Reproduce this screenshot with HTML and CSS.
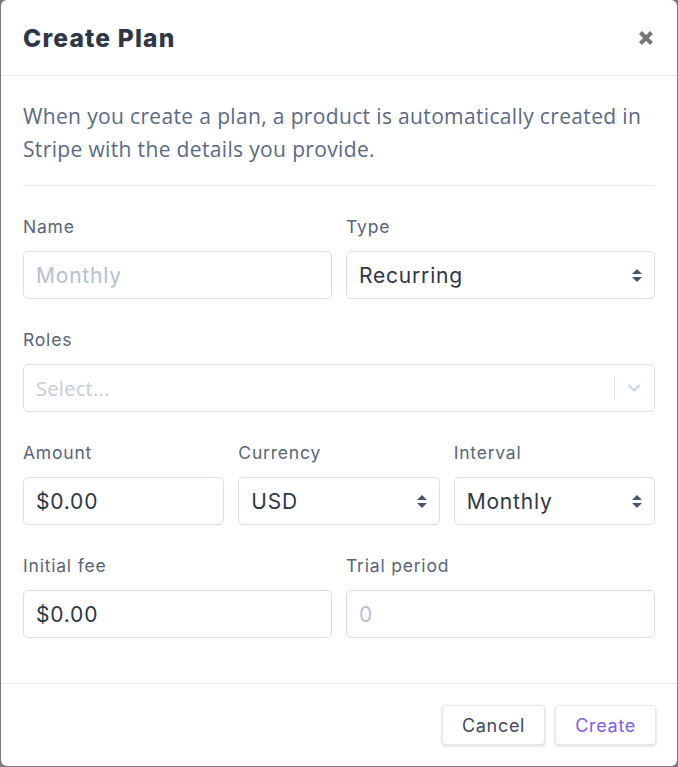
FILE: index.html
```html
<!DOCTYPE html>
<html>
<head>
<meta charset="utf-8">
<link rel="stylesheet" href="styles.css">
</head>
<body>
<div class="modal">
  <div class="header">
    <h1 class="title">Create Plan</h1>
    <span class="close">
      <svg width="16" height="16" viewBox="0 0 16 16"><path d="M2.5 2.5 L13.5 13.5 M13.5 2.5 L2.5 13.5" stroke="#777" stroke-width="4" stroke-linecap="butt"/></svg>
    </span>
  </div>
  <div class="body">
    <p class="desc">When you create a plan, a product is automatically created in Stripe with the details you provide.</p>
    <div class="rule"></div>
    <div class="row two">
      <div class="field">
        <div class="label">Name</div>
        <div class="input placeholder">Monthly</div>
      </div>
      <div class="field">
        <div class="label">Type</div>
        <div class="input select">Recurring<span class="arrows"></span></div>
      </div>
    </div>
    <div class="row one">
      <div class="field">
        <div class="label">Roles</div>
        <div class="input multi"><span class="ph-open">Select...</span><span class="sep"></span><svg class="chev" width="14" height="10" viewBox="0 0 14 10"><path d="M1.5 2 L7 7.5 L12.5 2" fill="none" stroke="#ccd6e5" stroke-width="2.2"/></svg></div>
      </div>
    </div>
    <div class="row three">
      <div class="field">
        <div class="label">Amount</div>
        <div class="input">$0.00</div>
      </div>
      <div class="field">
        <div class="label">Currency</div>
        <div class="input select">USD<span class="arrows"></span></div>
      </div>
      <div class="field">
        <div class="label">Interval</div>
        <div class="input select">Monthly<span class="arrows"></span></div>
      </div>
    </div>
    <div class="row two">
      <div class="field">
        <div class="label">Initial fee</div>
        <div class="input">$0.00</div>
      </div>
      <div class="field">
        <div class="label">Trial period</div>
        <div class="input placeholder">0</div>
      </div>
    </div>
  </div>
  <div class="footer">
    <button class="btn">Cancel</button>
    <button class="btn primary">Create</button>
  </div>
</div>
</body>
</html>
```

FILE: styles.css
```css
html, body { margin: 0; padding: 0; }
body {
  background: #7a7a7a;
  width: 678px;
  height: 767px;
  overflow: hidden;
  font-family: Inter, "Noto Sans", sans-serif;
}
.modal {
  margin: 0 1px;
  height: 766px;
  background: #fff;
  border-radius: 6px;
  display: flex;
  flex-direction: column;
}
.header {
  height: 76px;
  border-bottom: 1px solid #e2e8f3;
  display: flex;
  align-items: center;
  justify-content: space-between;
  padding: 0 23px 0 22px;
  box-sizing: border-box;
}
.title {
  margin: 0;
  font-size: 24.5px;
  font-weight: 800;
  color: #2d3748;
  letter-spacing: 1.2px;
}
.close { display: flex; padding-top: 1px; }
.body {
  padding: 24px 22px 0 22px;
  flex: 1;
}
.desc {
  margin: 0;
  font-family: "Open Sans", sans-serif;
  font-size: 21px;
  line-height: 33px;
  letter-spacing: 0.35px;
  color: #5a6a85;
}
.rule {
  height: 1px;
  background: #e8e8e8;
  margin: 19px 0 31px;
}
.row {
  display: grid;
  gap: 14px;
  margin-bottom: 31px;
}
.two { grid-template-columns: 1fr 1fr; }
.one { grid-template-columns: 1fr; }
.three { grid-template-columns: 1fr 1fr 1fr; }
.label {
  font-size: 17.5px;
  font-weight: 400;
  color: #58657a;
  line-height: 20px;
  letter-spacing: 0.8px;
  margin-bottom: 14px;
}
.input {
  height: 48px;
  box-sizing: border-box;
  border: 1px solid #d5dfee;
  border-radius: 5px;
  padding: 0 12px;
  display: flex;
  align-items: center;
  font-size: 21px;
  letter-spacing: 0.8px;
  color: #2d3748;
  position: relative;
}
.placeholder { color: #b5c0d1; }
.select .arrows {
  position: absolute;
  right: 12px;
  top: 17px;
  width: 10px;
  height: 14px;
}
.select .arrows::before, .select .arrows::after {
  content: "";
  position: absolute;
  left: 0;
  border-left: 5px solid transparent;
  border-right: 5px solid transparent;
}
.select .arrows::before { top: 0; border-bottom: 5px solid #4a5568; }
.select .arrows::after { top: 8px; border-top: 5px solid #4a5568; }
.multi {
  font-family: "Open Sans", sans-serif;
  font-size: 20px;
  letter-spacing: 0.3px;
  color: #c3ccda;
  padding-right: 13px;
}
.ph-open { flex: 1; }
.sep {
  width: 1px;
  height: 24px;
  background: #dde4ee;
  margin-right: 12px;
}
.chev { display: block; }
.footer {
  height: 83px;
  border-top: 1px solid #e2e8f3;
  display: flex;
  justify-content: flex-end;
  align-items: center;
  gap: 10px;
  padding: 0 21px 0 0;
  box-sizing: border-box;
}
.btn {
  height: 40px;
  padding: 0 19px;
  font-family: Inter, "Noto Sans", sans-serif;
  font-size: 18px;
  font-weight: 400;
  letter-spacing: 0.7px;
  color: #3f4a5c;
  background: #fff;
  border: 1px solid #e6e9ef;
  border-radius: 4px;
  box-shadow: 0 1px 3px rgba(0,0,0,0.18);
}
.primary { color: #7e5fe8; }
```
